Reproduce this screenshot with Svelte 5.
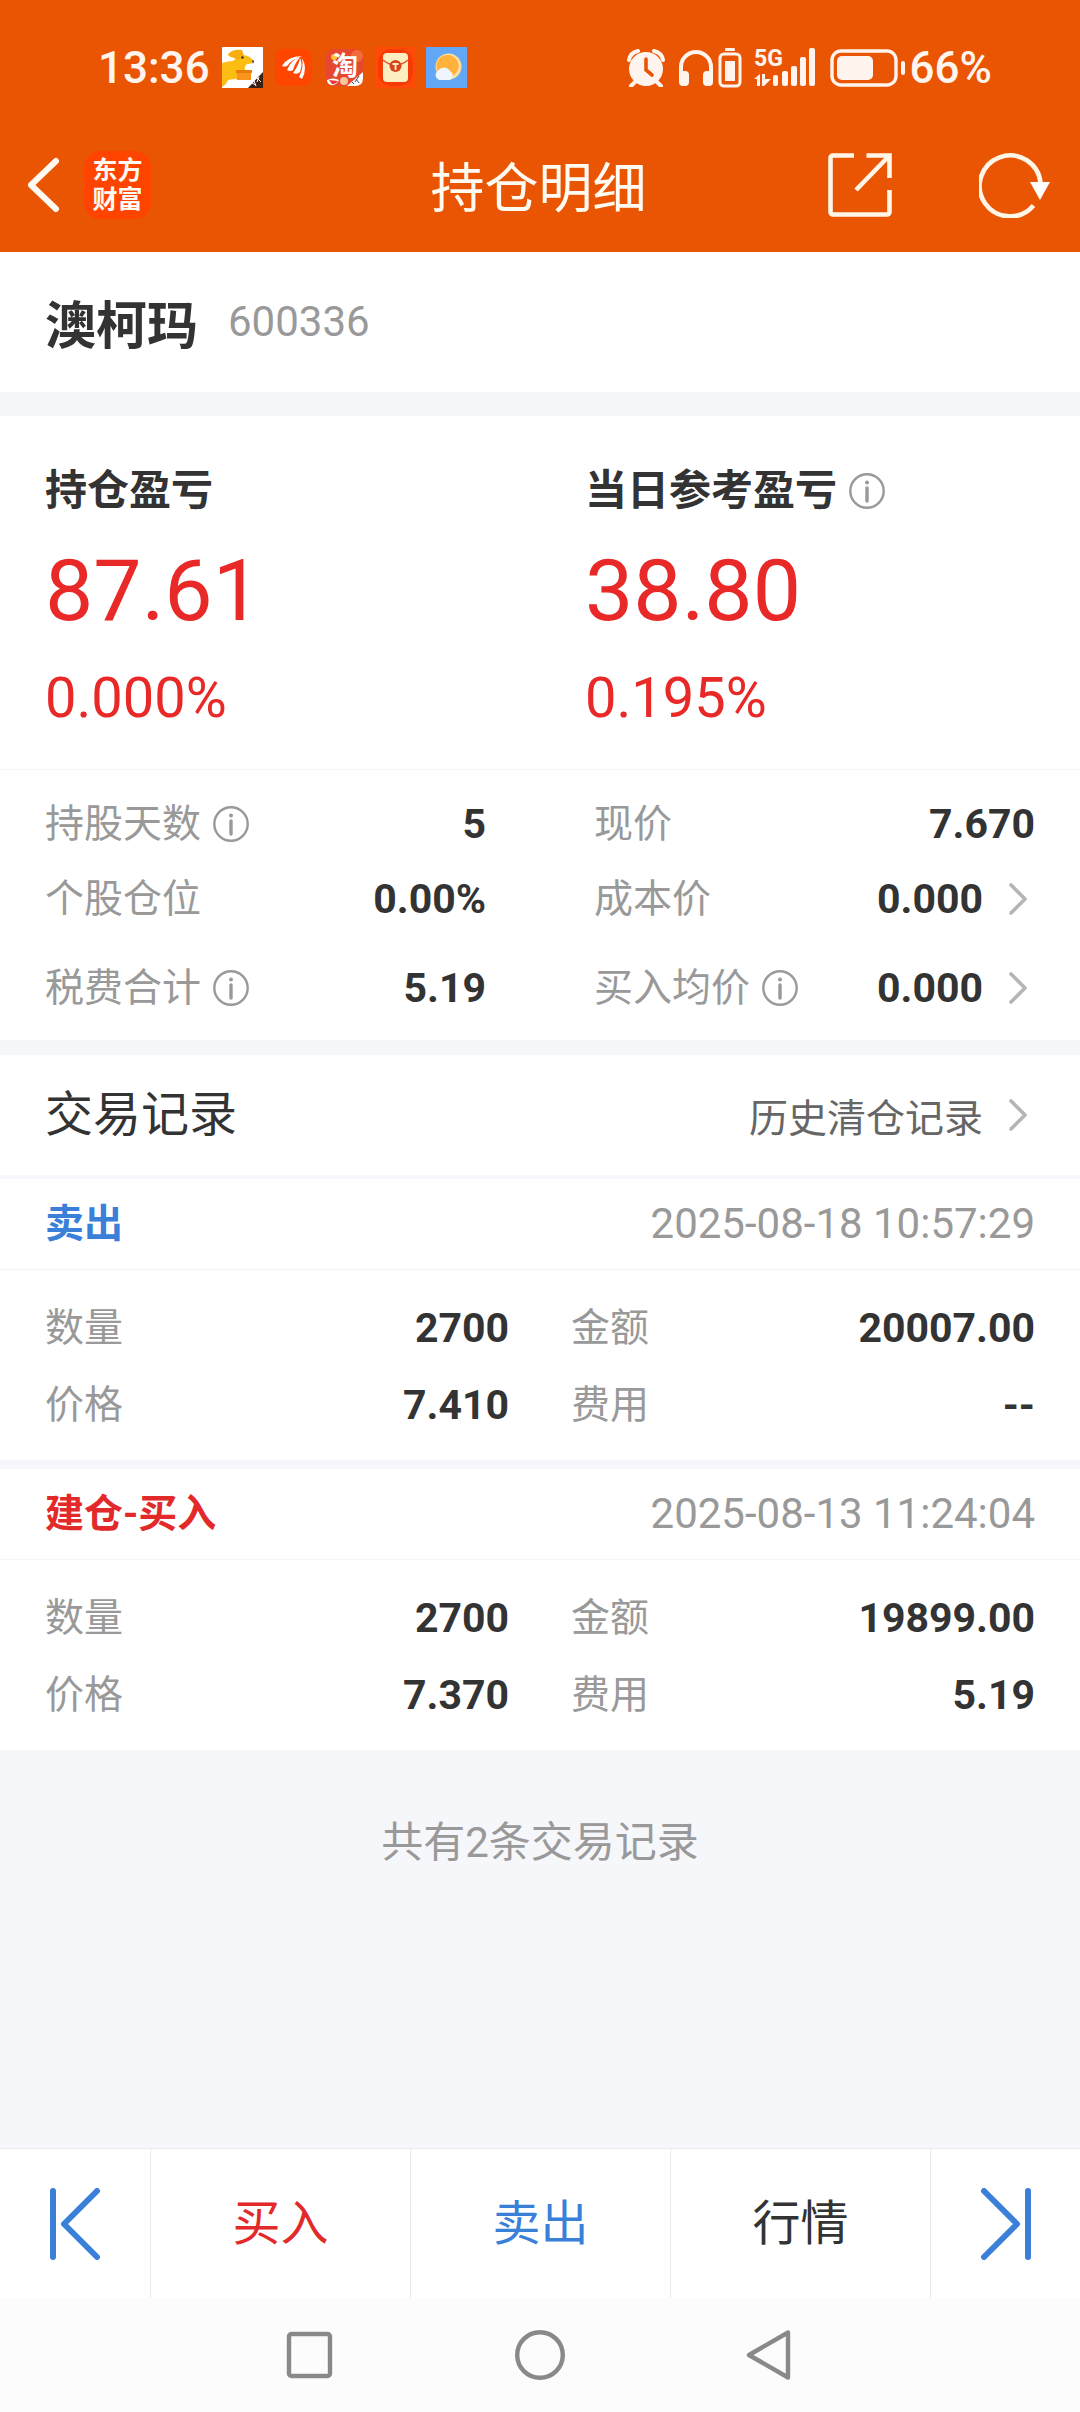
<script>
  const profits = [
    { label: '持仓盈亏', amount: '87.61', rate: '0.000%', info: false },
    { label: '当日参考盈亏', amount: '38.80', rate: '0.195%', info: true }
  ];

  const stats = [
    { label: '持股天数', value: '5', info: true, more: false },
    { label: '现价', value: '7.670', info: false, more: false },
    { label: '个股仓位', value: '0.00%', info: false, more: false },
    { label: '成本价', value: '0.000', info: false, more: true },
    { label: '税费合计', value: '5.19', info: true, more: false },
    { label: '买入均价', value: '0.000', info: true, more: true }
  ];

  const records = [
    {
      type: '卖出',
      side: 'sell',
      time: '2025-08-18 10:57:29',
      fields: [['数量', '2700'], ['金额', '20007.00'], ['价格', '7.410'], ['费用', '--']]
    },
    {
      type: '建仓-买入',
      side: 'buy',
      time: '2025-08-13 11:24:04',
      fields: [['数量', '2700'], ['金额', '19899.00'], ['价格', '7.370'], ['费用', '5.19']]
    }
  ];
</script>

{#snippet infoButton(label)}
  <button class="info" aria-label={`${label}说明`}>
    <svg width="36" height="36" viewBox="0 0 36 36" fill="none" stroke="#999" aria-hidden="true">
      <circle cx="18" cy="18" r="16.7" stroke-width="2.4" />
      <path d="M18 15v13" stroke-width="3.4" stroke-linecap="round" />
      <circle cx="18" cy="9.5" r="2" fill="#999" stroke="none" />
    </svg>
  </button>
{/snippet}

{#snippet chevron()}
  <svg class="chevron" width="20" height="34" viewBox="0 0 20 34" fill="none" stroke="#b5b5b5" stroke-width="3.6" stroke-linecap="round" stroke-linejoin="round" aria-hidden="true">
    <path d="M3 3l14 14L3 31" />
  </svg>
{/snippet}

<div class="page">
  <header>
    <div class="status">
      <div class="status-left">
        <span class="clock">13:36</span>
        <svg class="app-a" width="41" height="41" viewBox="0 0 41 41" aria-hidden="true">
          <rect width="41" height="41" fill="#fff" />
          <path d="M0 16q6-2 11-2 2-1 2-3Q6 10 6 7q2-2 7-3 5-1 8 4 6 0 11 6-1 3-7 3-3 2-2 6h6v9H15q-4 0-9 1-2 5-6 7z" fill="#fbbd12" />
          <path d="M6 8q3-6 14-5l2 6q-5 5-9 2z" fill="#f8ae10" />
          <path d="M15 23h14v10H15z" fill="#f7951d" />
          <path d="M14 23h16v3H14z" fill="#e97c0a" />
          <circle cx="20.500" cy="10.500" r="1.200" fill="#332" />
          <path d="M30 13l2 1-1 3z" fill="#322" />
          <path d="M26 41l15-16v16z" fill="#3a2113" />
          <path d="M30 36l4 2M32 34l2 5M35 31l4 4M37 30l-2 5" stroke="#fff" stroke-width="1" />
        </svg>
        <svg class="app-b" width="37" height="37" viewBox="0 0 37 37" aria-hidden="true">
          <rect width="37" height="37" rx="8" fill="#ff4600" />
          <path d="M7 17Q13 7 27 7 16 11 12 17q-3 1-5 0zM12 21q4-10 13-13-6 8-7 13-3 2-6 0zM18 24q6-8 7-15 3 6 0 14-3 3-7 1zM24 28q5-9 3-19 6 10 0 21z" fill="#fff" />
        </svg>
        <svg class="app-c" width="37" height="37" viewBox="0 0 37 37" aria-hidden="true">
          <rect width="37" height="37" rx="8" fill="#e5482f" />
          <circle cx="8" cy="8" r="3" fill="#ffc53a" />
          <circle cx="31" cy="7" r="6" fill="#f36a3d" />
          <path d="M21 37l16-14v6q0 8-8 8z" fill="#fff" />
          <path d="M1 31q6-3 12 0-3 6-8 5-4-1-4-5z" fill="#fff" />
          <path d="M3 31l9 1q-3 4-6 3z" fill="#e33" />
          <circle cx="18" cy="32" r="4" fill="#f2c59b" />
          <path d="M26 33l2 2M30 30l3 4M33 27l-4 6" stroke="#456" />
          <text x="19" y="26" text-anchor="middle" font-size="26" font-weight="700" fill="#fff">淘</text>
        </svg>
        <svg class="app-d" width="41" height="41" viewBox="0 0 41 41" aria-hidden="true">
          <rect width="41" height="41" fill="#ff4b08" />
          <rect x="3" y="2" width="35" height="37" rx="14" fill="#f63a05" />
          <rect x="8" y="6" width="25" height="29" rx="4" fill="#fdeec2" />
          <path d="M8 13q6 5 12.500 5T33 13" fill="none" stroke="#dd5a33" stroke-width="1.500" />
          <circle cx="20.500" cy="19" r="6" fill="#d6431d" />
          <path d="M17.500 17h6M20.500 17v6" stroke="#fdeec2" stroke-width="1.800" />
        </svg>
        <svg class="app-e" width="41" height="41" viewBox="0 0 41 41" aria-hidden="true">
          <rect width="41" height="41" fill="#62a7f6" />
          <circle cx="22.500" cy="19.500" r="13" fill="#ffdf9a" />
          <circle cx="21.500" cy="19" r="11" fill="#ffb13c" />
          <path d="M13 33a5 5 0 0 1-1-9 7 7 0 0 1 12 0 5 5 0 0 1 0 9z" fill="#eef5ff" />
        </svg>
      </div>
      <div class="status-right">
        <svg width="38" height="38" viewBox="0 0 38 38" aria-hidden="true">
          <circle cx="19" cy="20" r="17" fill="#fff5ee" />
          <path d="M2 11q1-7 9-9M36 11q-1-7-9-9M8 33l-4 4M30 33l4 4" stroke="#fff5ee" stroke-width="4" stroke-linecap="round" fill="none" />
          <path d="M19 10v11l6 5" stroke="#ea5504" stroke-width="3.600" stroke-linecap="round" fill="none" />
        </svg>
        <svg class="phones" width="36" height="38" viewBox="0 0 36 38" aria-hidden="true">
          <path d="M3 28V18a15 15 0 0 1 30 0v10" fill="none" stroke="#fff5ee" stroke-width="4" />
          <rect x="1" y="22" width="10" height="15" rx="4" fill="#fff5ee" />
          <rect x="25" y="22" width="10" height="15" rx="4" fill="#fff5ee" />
        </svg>
        <svg class="device" width="24" height="40" viewBox="0 0 24 40" aria-hidden="true">
          <rect x="7" y="0" width="10" height="3" rx="1" fill="#fff5ee" />
          <rect x="2" y="6" width="20" height="32" rx="4" fill="none" stroke="#fff5ee" stroke-width="3" />
          <rect x="7" y="13" width="10" height="20" fill="#fff5ee" />
        </svg>
        <svg class="signal" width="64" height="48" viewBox="0 -4 64 48" fill="#fff5ee" aria-hidden="true">
          <text x="0" y="18" font-size="23" font-weight="700">5G</text>
          <path d="M0 31l6-5v12H3v-7zM8 26h3v5h6l-7 7H8z" />
          <rect x="19" y="27" width="5" height="11" rx="2" />
          <rect x="28" y="23" width="6" height="15" rx="2" />
          <rect x="37" y="18" width="6" height="20" rx="2" />
          <rect x="46" y="9" width="6" height="29" rx="2" />
          <rect x="55" y="0" width="6" height="38" rx="2" />
        </svg>
        <svg class="battery" width="76" height="38" viewBox="0 0 76 38" aria-hidden="true">
          <rect x="2" y="2" width="64" height="34" rx="9" fill="none" stroke="#fff5ee" stroke-width="3.400" />
          <rect x="7" y="7" width="36" height="24" rx="5" fill="#fff5ee" />
          <rect x="71" y="12" width="4" height="14" rx="2" fill="#fff5ee" />
        </svg>
        <span class="clock">66%</span>
      </div>
    </div>

    <div class="titlebar">
      <div class="title-side">
        <button class="back" aria-label="返回">
          <svg width="34" height="56" viewBox="0 0 34 56" fill="none" stroke="#fffaf2" stroke-width="6" stroke-linecap="round" stroke-linejoin="round" aria-hidden="true">
            <path d="M30 4L5 28l25 24" />
          </svg>
        </button>
        <div class="logo"><span>东方</span><span>财富</span></div>
      </div>
      <h1>持仓明细</h1>
      <div class="title-side title-actions">
        <button aria-label="分享">
          <svg width="64" height="64" viewBox="0 0 64 64" fill="none" stroke="#fff6e8" stroke-width="4.600" aria-hidden="true">
            <path d="M26 2.500H5a2.500 2.500 0 0 0-2.500 2.500v54A2.500 2.500 0 0 0 5 61.500h54a2.500 2.500 0 0 0 2.500-2.500V37M38.500 2.500h23V25M61 3L28 37" />
          </svg>
        </button>
        <button aria-label="刷新">
          <svg width="72" height="66" viewBox="0 0 72 66" aria-hidden="true">
            <path d="M54.500 53.500A30.500 30.500 0 1 1 61.500 31" fill="none" stroke="#fff6e8" stroke-width="4.600" />
            <path d="M51 30h20L61 48z" fill="#fff" />
          </svg>
        </button>
      </div>
    </div>
  </header>

  <main>
    <section class="stock">
      <h2>澳柯玛</h2>
      <span>600336</span>
    </section>

    <section class="panel">
      <div class="profits">
        {#each profits as p}
          <div class="profit">
            <h3>{p.label}{#if p.info}{@render infoButton(p.label)}{/if}</h3>
            <strong>{p.amount}</strong>
            <span>{p.rate}</span>
          </div>
        {/each}
      </div>
      <dl class="stats">
        {#each stats as s}
          <div class="pair">
            <dt>{s.label}{#if s.info}{@render infoButton(s.label)}{/if}</dt>
            <dd>
              {#if s.more}
                <button class="more" aria-label={`${s.label} ${s.value}`}>{s.value}{@render chevron()}</button>
              {:else}{s.value}{/if}
            </dd>
          </div>
        {/each}
      </dl>
    </section>

    <section class="history">
      <h2>交易记录</h2>
      <a class="more" href="#history">历史清仓记录{@render chevron()}</a>
    </section>

    <div class="records">
      {#each records as r}
        <article>
          <div class="record-head">
            <h3 class={r.side}>{r.type}</h3>
            <time>{r.time}</time>
          </div>
          <dl>
            {#each r.fields as [label, value]}
              <div class="pair">
                <dt>{label}</dt>
                <dd>{value}</dd>
              </div>
            {/each}
          </dl>
        </article>
      {/each}
    </div>
    <p class="total">共有2条交易记录</p>
  </main>

  <footer>
    <div class="tabs">
      <button aria-label="上一只">
        <svg width="52" height="72" viewBox="0 0 52 72" fill="none" stroke="#3a80d9" stroke-width="6" stroke-linecap="round" stroke-linejoin="round" aria-hidden="true">
          <path d="M4 3v66M48 3L15 36l33 33" />
        </svg>
      </button>
      <button class="buy">买入</button>
      <button class="sell">卖出</button>
      <button>行情</button>
      <button aria-label="下一只">
        <svg width="52" height="72" viewBox="0 0 52 72" fill="none" stroke="#3a80d9" stroke-width="6" stroke-linecap="round" stroke-linejoin="round" aria-hidden="true">
          <path d="M48 3v66M4 3l33 33L4 69" />
        </svg>
      </button>
    </div>
    <nav aria-label="系统导航">
      <button aria-label="最近任务">
        <svg width="50" height="50" viewBox="0 0 50 50" fill="none" stroke="#898989" stroke-width="4.400" aria-hidden="true">
          <rect x="4" y="4" width="41" height="42" rx="2.500" />
        </svg>
      </button>
      <button aria-label="主屏幕">
        <svg width="50" height="50" viewBox="0 0 50 50" fill="none" stroke="#898989" stroke-width="4.400" aria-hidden="true">
          <circle cx="25" cy="25" r="22.800" />
        </svg>
      </button>
      <button aria-label="返回上一页">
        <svg width="50" height="50" viewBox="0 0 50 50" fill="none" stroke="#898989" stroke-width="4.400" stroke-linejoin="round" aria-hidden="true">
          <path d="M43 2.500v45L4 25z" />
        </svg>
      </button>
    </nav>
  </footer>
</div>

<style>
  :global(body) {
    margin: 0;
    background: #f6f7fa;
  }
  .page {
    display: flex;
    flex-direction: column;
    min-height: 100vh;
    font-family: Roboto, 'Noto Sans CJK SC', sans-serif;
    font-size: 39px;
    line-height: 60px;
    color: #333;
  }
  h1, h2, h3, p, dl, dd {
    margin: 0;
  }
  button {
    padding: 0;
    border: 0;
    background: none;
    font: inherit;
    color: inherit;
    cursor: pointer;
  }
  svg {
    display: block;
    flex: none;
  }
  h1, .stock h2, .history a {
    font-family: 'Noto Sans CJK SC', sans-serif;
  }

  header {
    background: #ea5504;
    color: #fffaf2;
  }
  .status {
    display: flex;
    justify-content: space-between;
    align-items: center;
    padding: 17px 88px 0 98px;
    height: 101px;
  }
  .status-left, .status-right {
    display: flex;
    align-items: center;
  }
  .clock {
    font-size: 44px;
    font-weight: 500;
    color: #fff5ee;
  }
  .app-a, .app-b, .app-d {
    margin-left: 12px;
  }
  .app-c {
    margin-left: 14px;
  }
  .app-e {
    margin-left: 10px;
  }
  .phones {
    margin-left: 13px;
  }
  .device {
    margin-left: 4px;
  }
  .signal, .battery {
    margin-left: 12px;
  }
  .battery {
    margin-right: 4px;
  }
  .titlebar {
    display: flex;
    align-items: center;
    height: 134px;
    padding: 0 29px 0 26px;
  }
  .title-side {
    flex: 1 0 0;
    display: flex;
    align-items: center;
    gap: 24px;
  }
  .title-actions {
    justify-content: flex-end;
    gap: 87px;
  }
  h1 {
    font-size: 54px;
    font-weight: 400;
  }
  .logo {
    display: flex;
    flex-direction: column;
    justify-content: center;
    align-items: center;
    width: 67px;
    height: 68px;
    border-radius: 16px;
    background: #ff4400;
    font-size: 25px;
    line-height: 29px;
    font-weight: 700;
  }

  .stock {
    display: flex;
    align-items: center;
    gap: 30px;
    height: 140px;
    padding: 0 45px;
    background: #fff;
  }
  .stock h2 {
    font-size: 51px;
    font-weight: 700;
  }
  .stock span {
    font-size: 42px;
    color: #999;
  }

  .panel {
    margin-top: 24px;
    background: #fff;
  }
  .profits {
    display: grid;
    grid-template-columns: 1fr 1fr;
    padding: 45px 0 41px;
    border-bottom: 1px solid #f6f6f6;
  }
  .profit {
    display: flex;
    flex-direction: column;
    padding-left: 45px;
    color: #e92828;
  }
  .profit h3 {
    display: flex;
    align-items: center;
    gap: 12px;
    font-size: 42px;
    font-weight: 700;
    color: #333;
  }
  .profit strong {
    margin: 20px 0 27px;
    font-size: 86px;
    line-height: 100px;
    font-weight: 400;
  }
  .profit span {
    font-size: 56px;
  }

  .pair {
    display: flex;
    justify-content: space-between;
    align-items: center;
  }
  dt {
    display: flex;
    align-items: center;
    gap: 12px;
    color: #999;
  }
  dd {
    font-size: 41px;
    font-weight: 700;
  }
  .stats {
    display: grid;
    grid-template-columns: 1fr 1fr;
    grid-template-rows: 75px 75px 104px;
    column-gap: 108px;
    padding: 16px 45px 0;
  }
  .more {
    display: flex;
    align-items: center;
    gap: 25px;
    padding-right: 7px;
    color: inherit;
    text-decoration: none;
  }

  .history {
    display: flex;
    justify-content: space-between;
    align-items: center;
    height: 120px;
    margin-top: 15px;
    padding: 0 45px;
    background: #fff;
  }
  .history h2 {
    font-size: 48px;
    font-weight: 400;
  }
  .history .more {
    color: #666;
  }

  .records {
    display: flex;
    flex-direction: column;
    gap: 9px;
    margin-top: 4px;
  }
  article {
    background: #fff;
  }
  .record-head {
    display: flex;
    justify-content: space-between;
    align-items: center;
    height: 90px;
    padding: 0 45px;
    border-bottom: 1px solid #f4f5f6;
  }
  .record-head h3 {
    font-size: 39px;
    font-weight: 700;
  }
  time {
    font-size: 42px;
    color: #999;
  }
  article dl {
    display: grid;
    grid-template-columns: 1fr 1fr;
    grid-auto-rows: 77px;
    column-gap: 62px;
    padding: 19px 45px 17px;
  }
  .buy {
    color: #e22a2a;
  }
  .sell {
    color: #3a80d9;
  }
  .total {
    padding: 63px 0;
    font-size: 42px;
    text-align: center;
    color: #999;
  }

  footer {
    margin-top: auto;
  }
  .tabs {
    display: grid;
    grid-template-columns: 15fr 26fr 26fr 26fr 15fr;
    height: 149px;
    border-top: 1px solid #ebebeb;
    background: #fff;
    font-size: 48px;
  }
  .tabs button {
    display: flex;
    justify-content: center;
    align-items: center;
  }
  .tabs button + button {
    border-left: 1px solid #ebebeb;
  }
  nav {
    display: flex;
    justify-content: center;
    align-items: center;
    gap: 180px;
    height: 114px;
    background: #fcfcfc;
  }
</style>
